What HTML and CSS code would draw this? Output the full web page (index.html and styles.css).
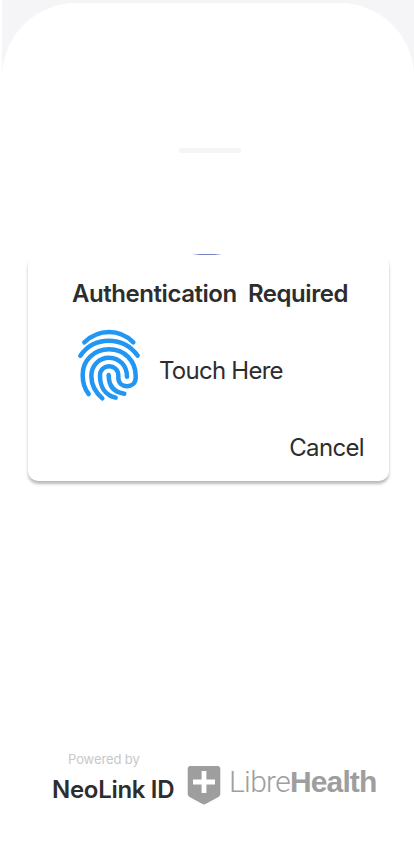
FILE: index.html
```html
<!DOCTYPE html>
<html lang="en">
<head>
<meta charset="utf-8">
<meta name="viewport" content="width=device-width, initial-scale=1">
<title>Authentication</title>
<link rel="stylesheet" href="styles.css">
</head>
<body>
<div class="backdrop">
<main class="sheet">
  <div class="handle"></div>
  <div class="accent"></div>
  <section class="dialog">
    <h1>Authentication&nbsp; Required</h1>
    <div class="touch">
      <svg class="fingerprint" viewBox="0 0 240 270" fill="none" stroke="#2196f3" stroke-width="13.5" stroke-linecap="round" stroke-linejoin="round">
        <path d="M43 67C86 26 149 26 190 67"/>
        <path d="M31 107C72 47 160 47 203 107"/>
        <path d="M56 222C41 203 38 184 38 164C38 121 72 88 117 88C163 88 197 122 197 168V173C197 207 145 207 145 173V167C145 129 90 129 90 167C90 202 107 226 137 233"/>
        <path d="M97 235C73 214 64 194 64 168C64 137 87 113 117 113C148 113 171 137 171 170"/>
        <path d="M116 165C116 199 132 217 163 221"/>
      </svg>
      <span>Touch Here</span>
    </div>
    <button class="cancel" type="button">Cancel</button>
  </section>
  <footer>
    <div class="brand">
      <small>Powered by</small>
      <strong>NeoLink ID</strong>
    </div>
    <svg class="shield" viewBox="0 0 34 40">
      <path fill="#9e9e9e" d="M3 1H31Q33.3 1 33.3 3.5V29Q33.3 31 31.5 32L18.5 39Q17 39.8 15.5 39L2.5 32Q.7 31 .7 29V3.5Q.7 1 3 1Z"/>
      <path fill="#fff" d="M14.6 6H19.4V14.6H28V19.4H19.4V28H14.6V19.4H6V14.6H14.6Z"/>
    </svg>
    <div class="libre"><span>Libre</span><b>Health</b></div>
  </footer>
</main>
</div>
</body>
</html>
```
FILE: styles.css
```css
* { box-sizing: border-box; }
body { margin: 0; background: #fff; color: #2d2d2d; font-family: Inter, "Liberation Sans", sans-serif; }
.backdrop {
  width: 412px;
  height: 850px;
  margin-left: 2px;
  padding-top: 3px;
  background: linear-gradient(#f5f5f7 78px, #fff 78px);
}
.sheet {
  display: flex;
  flex-direction: column;
  height: 847px;
  padding-top: 145px;
  background: #fff;
  border-radius: 74px 74px 0 0;
}
.handle { width: 62px; height: 5px; margin-left: 177px; border-radius: 2.5px; background: #f5f5f6; }
.accent {
  width: 30px;
  height: 1px;
  margin: 101px 0 0 190px;
  background: linear-gradient(90deg, transparent, #7784c4 25%, #7784c4 75%, transparent);
}
.dialog {
  display: flex;
  flex-direction: column;
  width: 361px;
  height: 226px;
  margin-left: 26px;
  padding: 22px 25px 0 44px;
  border-radius: 10px;
  background: #fff;
  box-shadow: 0 3px 3px rgba(0, 0, 0, .27);
}
h1 { margin: 0; font-size: 24px; line-height: 34px; font-weight: 600; letter-spacing: -.45px; white-space: nowrap; }
.touch { display: flex; align-items: center; height: 90px; margin: 9px 0 0 -2px; font-size: 24px; letter-spacing: -.75px; white-space: nowrap; }
.touch span { margin: 10px 0 0 9px; }
.fingerprint { width: 80px; height: 90px; }
.cancel { align-self: flex-end; margin: 20px 0 0; padding: 0; border: 0; background: none; color: inherit; font: 24px/36px Inter, "Liberation Sans", sans-serif; letter-spacing: -.65px; }
footer { display: flex; align-items: flex-start; margin: 268px 0 0 50px; white-space: nowrap; }
.brand { width: 135px; }
.brand small { display: block; margin-left: 16px; color: #c8c8c8; font-size: 13px; line-height: 20px; letter-spacing: -.1px; }
.brand strong { display: block; font-size: 24px; line-height: 34px; font-weight: 600; letter-spacing: -.3px; margin-top: 4px; }
.shield { width: 34px; height: 40px; margin-top: 16px; }
.libre { margin: 15px 0 0 8px; color: #9e9e9e; font: 30px/36px Roboto, sans-serif; }
.libre span { font-weight: 300; letter-spacing: -.7px; }
.libre b { font: bold 30px/30px "Liberation Sans", sans-serif; letter-spacing: -.9px; }
```
